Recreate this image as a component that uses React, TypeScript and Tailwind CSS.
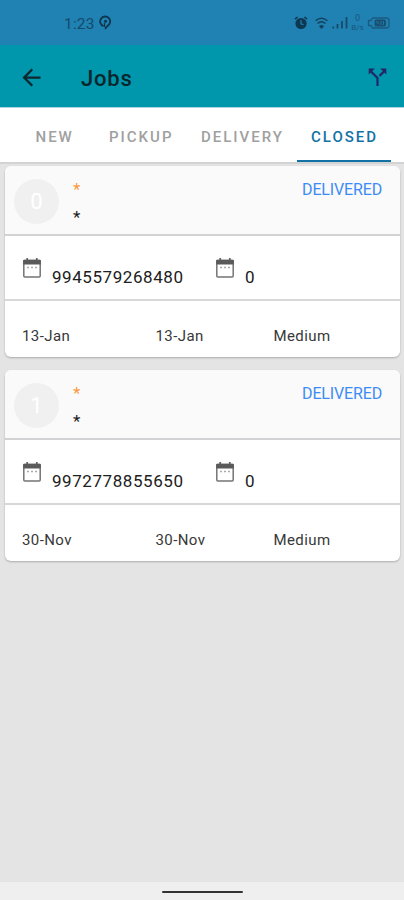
import { MdArrowBack } from "react-icons/md";
import { clsx } from "clsx";

const tabs = [
  { label: "NEW", width: "w-[73px]", pad: "pl-[17.5px]" },
  { label: "PICKUP", width: "w-[92px]", pad: "pl-[18px]" },
  { label: "DELIVERY", width: "w-[114px]", pad: "pl-[18px]" },
  { label: "CLOSED", width: "w-[94px]", pad: "pl-[14px]", active: true },
];

const jobs = [
  { phone: "9945579268480", count: "0", start: "13-Jan", end: "13-Jan", priority: "Medium" },
  { phone: "9972778855650", count: "0", start: "30-Nov", end: "30-Nov", priority: "Medium" },
];

function CalendarIcon() {
  return (
    <svg className="mt-5 size-6 shrink-0" viewBox="0 0 24 24" fill="none">
      <path d="M7.2 2v3M16.8 2v3" stroke="#666" strokeWidth="1.8" />
      <rect x="3.8" y="4.5" width="16.4" height="16.4" rx="1" stroke="#747474" strokeWidth="1.5" />
      <path d="M3.2 4.6q0-.8.8-.8h16q.8 0 .8.8v3.9H3.2z" fill="#5a5a5a" />
      <path d="M7 11.5h2M11 11.5h2M15 11.5h2" stroke="#aaa" strokeWidth="1.6" />
    </svg>
  );
}

function SplitIcon() {
  return (
    <svg className="ml-auto size-[27px]" viewBox="0 0 27 27" fill="none" stroke="#242765">
      <path d="M13.5 22v-8L6.5 7M15.5 11.9l5-4.9" strokeWidth="2.2" />
      <path d="M4.7 4.4h6.2L4.7 10.4ZM22.3 4.4h-6.2l6.2 6Z" fill="#242765" stroke="none" />
    </svg>
  );
}

function StatusBar() {
  return (
    <div className="flex h-[45px] items-center bg-[#2081b3] pl-16 text-[#154a68]">
      <span className="w-[35px] pt-0.5 text-[15.5px] leading-5 tracking-[0.2px]">1:23</span>
      <svg className="h-[15px] w-[13px]" viewBox="0 0 13 15" fill="none" stroke="#0f354c">
        <path d="M4.5 11.2A5 5 0 1 1 8.5 10.9L6 13.8" strokeWidth="1.8" />
        <circle cx="6.5" cy="6.3" r="1.5" fill="#0f354c" stroke="none" />
        <path d="M5.5 8v4" strokeWidth="1.3" />
      </svg>
      <svg className="ml-[182px] h-[14px] w-[14px]" viewBox="0 0 14 14">
        <path d="M1 3.2 3.6 1M13 3.2 10.4 1" stroke="#0d3850" strokeWidth="1.6" />
        <circle cx="7" cy="7.5" r="5.6" fill="#0d3850" />
        <path d="M7 4.3v3.5l2.5 1" stroke="#2081b3" strokeWidth="1.2" fill="none" />
      </svg>
      <svg className="ml-[7px] h-[14px] w-[13px]" viewBox="0 0 13 14" fill="none" stroke="#13425e">
        <path d="M.6 4.8Q6.5-.3 12.4 4.8" strokeWidth="1.5" />
        <path d="M2.5 7.5Q6.5 3.9 10.5 7.5" strokeWidth="1.5" />
        <path d="M4 10.2Q6.5 8 9 10.2L6.5 13Z" fill="#13425e" stroke="none" />
      </svg>
      <svg className="ml-[4px] h-[13px] w-4" viewBox="0 0 16 13" stroke="#164a68" strokeWidth="1.8">
        <path d="M1.3 12.5v-2M5.5 12.5V8M10 12.5V5M14.5 12.5V1" />
      </svg>
      <div className="ml-0.5 flex w-[15px] flex-col items-center text-[9px] leading-[10px] text-[#1a587c]">
        <span>0</span>
        <span className="text-[8px] leading-[9px]">B/s</span>
      </div>
      <svg className="ml-0.5 h-[12px] w-[23px]" viewBox="0 0 23 12">
        <path
          d="M5.5 1h14q2.5 0 2.5 2.5v5q0 2.5-2.5 2.5h-14L4 8.5H1.5v-5H4Z"
          fill="none"
          stroke="#1b5b80"
          strokeWidth="1.3"
        />
        <rect x="7.5" y="2.5" width="11.5" height="7" rx="1.5" fill="#185173" />
        <path d="M10 4v2h2M14 4v4M16.5 4v4" stroke="#2476a2" fill="none" />
      </svg>
    </div>
  );
}

function AppBar() {
  return (
    <header className="flex h-[62px] items-center bg-[#0096ac] pt-0.5 pr-[13px] pl-[18px]">
      <MdArrowBack className="size-[27px] text-[#10272d]" />
      <h1 className="mt-[3px] ml-9 text-[22px] leading-7 font-medium tracking-[0.8px] text-[#08262c]">
        Jobs
      </h1>
      <SplitIcon />
    </header>
  );
}

function TabBar() {
  return (
    <nav className="flex h-[55px] border-t border-[#a6d8df] bg-white pl-[18px]">
      {tabs.map((tab) => (
        <div
          key={tab.label}
          className={clsx(
            "flex items-center border-b-2 pt-[5px] text-[15px] leading-5 font-medium tracking-[2px] whitespace-nowrap",
            tab.width,
            tab.pad,
            tab.active ? "border-[#1272a5] text-[#1272a5]" : "border-transparent text-[#a0a0a0]"
          )}
        >
          {tab.label}
        </div>
      ))}
    </nav>
  );
}

function JobCard({ job, index }: { job: (typeof jobs)[number]; index: number }) {
  return (
    <section className="h-[191px] overflow-hidden rounded-md bg-white shadow-[0_1px_2px_rgba(0,0,0,0.25)]">
      <div className="flex h-[70px] items-start border-b-2 border-[#d2d2d4] bg-[#fafafa] pr-[18px] pl-[9px]">
        <div className="mt-[13px] flex size-[45px] items-center justify-center rounded-full bg-[#f0f0f0] text-[22px] text-white">
          {index}
        </div>
        <div className="ml-[14px] pt-[9px] text-[17px] leading-7">
          <p className="text-[#fb9a42]">*</p>
          <p className="text-[#202020]">*</p>
        </div>
        <span className="mt-3 ml-auto text-[16px] leading-6 tracking-[-0.15px] text-[#3c8cf5]">
          DELIVERED
        </span>
      </div>
      <div className="flex h-[65px] items-start border-b-2 border-[#d8d8d8] pl-[15px] text-[17px] text-[#202020]">
        <CalendarIcon />
        <span className="mt-[29px] ml-2 w-[161px] leading-6 tracking-[0.57px]">{job.phone}</span>
        <CalendarIcon />
        <span className="mt-[29px] ml-2 leading-6">{job.count}</span>
      </div>
      <div className="flex pt-[23px] pl-[17px] text-[15px] leading-6 tracking-[0.4px] text-[#383838]">
        <span className="w-[133.5px]">{job.start}</span>
        <span className="w-[118px]">{job.end}</span>
        <span>{job.priority}</span>
      </div>
    </section>
  );
}

export default function App() {
  return (
    <div className="flex h-[900px] w-[404px] flex-col overflow-hidden bg-[#e4e4e4] font-['Roboto',sans-serif]">
      <StatusBar />
      <AppBar />
      <TabBar />
      <main className="flex flex-1 flex-col gap-[13px] border-t-2 border-[#d3d3d3] pt-0.5 pr-1 pl-[5px]">
        {jobs.map((job, index) => (
          <JobCard key={job.phone} job={job} index={index} />
        ))}
      </main>
      <footer className="flex h-[18px] justify-center bg-[#efefef] pt-[9px]">
        <div className="h-0.5 w-[81px] rounded-full bg-[#333]" />
      </footer>
    </div>
  );
}
